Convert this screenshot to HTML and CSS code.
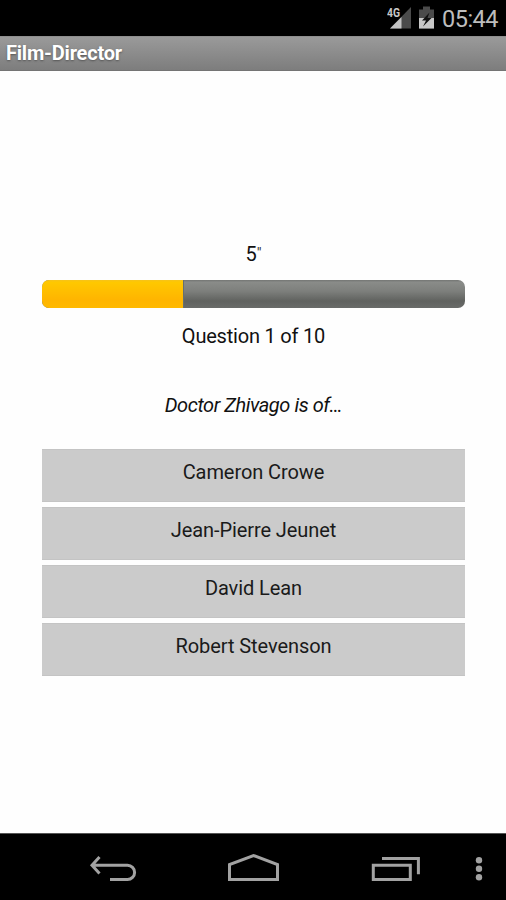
FILE: index.html
```html
<!DOCTYPE html>
<html lang="en">
<head>
<meta charset="utf-8">
<title>Film-Director</title>
<link rel="stylesheet" href="styles.css">
</head>
<body>
<header class="status">
  <svg class="status-icons" width="50" height="24" viewBox="0 0 50 24">
    <path d="M24 2V23.500H3Z" fill="#4b4b4b"/>
    <path d="M14.500 12V23.500H3Z" fill="#c4c4c4"/>
    <path d="M36 1.500h7v3h4v19H32v-19h4z" fill="#4b4b4b"/>
    <path d="M32 13h15v10.500H32z" fill="#c8c8c8"/>
    <path d="M42.500 7.500L35 15.500H39L36 21.500L44.500 13H40.500Z" fill="#111"/>
    <text class="network" x="0" y="11.500" textLength="13" lengthAdjust="spacingAndGlyphs">4G</text>
  </svg>
  <span class="clock">05:44</span>
</header>
<div class="titlebar"><h1>Film-Director</h1></div>
<main class="quiz">
  <p class="timer">5<span class="seconds">"</span></p>
  <div class="progress"><div class="progress-fill"></div></div>
  <p class="count">Question 1 of 10</p>
  <p class="question">Doctor Zhivago is of…</p>
  <div class="answers">
    <button class="answer">Cameron Crowe</button>
    <button class="answer">Jean-Pierre Jeunet</button>
    <button class="answer">David Lean</button>
    <button class="answer">Robert Stevenson</button>
  </div>
</main>
<nav class="nav">
  <svg width="506" height="66" viewBox="0 0 506 66" fill="none" stroke="#a2a2a2" stroke-width="3">
    <path d="M99.500 23L92 31.300L99.500 39.500M92 31.300H127.500a7 7 0 0 1 0 14.200H110"/>
    <path d="M229.500 45.500V30.500L253.500 21.500L277.500 30.500V45.500Z"/>
    <path d="M373.300 31.300H410.300V45.500H373.300ZM382 24.500H418.400V40.300"/>
    <g fill="#a2a2a2" stroke="none"><circle cx="479" cy="26.300" r="3.200"/><circle cx="479" cy="34.800" r="3.200"/><circle cx="479" cy="43.300" r="3.200"/></g>
  </svg>
</nav>
</body>
</html>
```
FILE: styles.css
```css
* { box-sizing: border-box; }
body {
  margin: 0;
  width: 506px;
  height: 900px;
  display: flex;
  flex-direction: column;
  overflow: hidden;
  background: #fefefe;
  color: #111;
  font-family: Roboto, sans-serif;
}
h1, p { margin: 0; }
.status {
  height: 36px;
  flex: none;
  display: flex;
  justify-content: flex-end;
  align-items: flex-start;
  padding: 5px 8px 0 0;
  background: #000;
  color: #bdbdbd;
}
.status-icons { margin-right: 5px; }
.network {
  font-size: 12.500px;
  font-weight: 700;
  fill: #c8c8c8;
  stroke: #000;
  stroke-width: 2px;
  paint-order: stroke;
}
.clock { font-size: 23.500px; line-height: 28px; letter-spacing: -0.500px; }
.titlebar {
  height: 35px;
  flex: none;
  padding-left: 6px;
  border-top: 1px solid #8e8e8e;
  border-bottom: 1px solid #747474;
  background: linear-gradient(#9a9a9a, #7d7d7d);
}
h1 {
  color: #fff;
  font-size: 20px;
  font-weight: 700;
  line-height: 33px;
  letter-spacing: -0.200px;
  text-shadow: 0 1px 2px #555;
}
.quiz {
  flex: 1;
  padding: 169px 41px 0 42px;
  text-align: center;
  font-size: 20px;
}
.timer { height: 40px; line-height: 27px; }
.seconds { font-size: 15px; vertical-align: 3px; color: #333; }
.progress {
  height: 28px;
  border-radius: 7px;
  overflow: hidden;
  background: linear-gradient(#737573, #8a8c89 8%, #7d7f7c 40%, #60625f 75%, #696b69);
}
.progress-fill {
  width: 142px;
  height: 28px;
  border-right: 1px solid #66706f;
  background: linear-gradient(#f6c31a, #ffc800 8%, #ffb500 70%, #ffb900);
}
.count { margin-top: 14px; line-height: 28px; letter-spacing: -0.200px; }
.question { margin-top: 42px; line-height: 26px; font-style: italic; letter-spacing: -0.450px; }
.answers { margin-top: 31px; display: grid; gap: 5px; }
.answer {
  height: 53px;
  padding: 0 0 7px;
  border: 1px solid #c4c4c4;
  border-width: 1px 0;
  background: #cbcbcb;
  color: #1a1a1a;
  font: 20px Roboto, sans-serif;
  letter-spacing: -0.080px;
}
.nav {
  height: 67px;
  flex: none;
  border-top: 1px solid #555;
  background: #000;
}
.nav svg { display: block; }
```
